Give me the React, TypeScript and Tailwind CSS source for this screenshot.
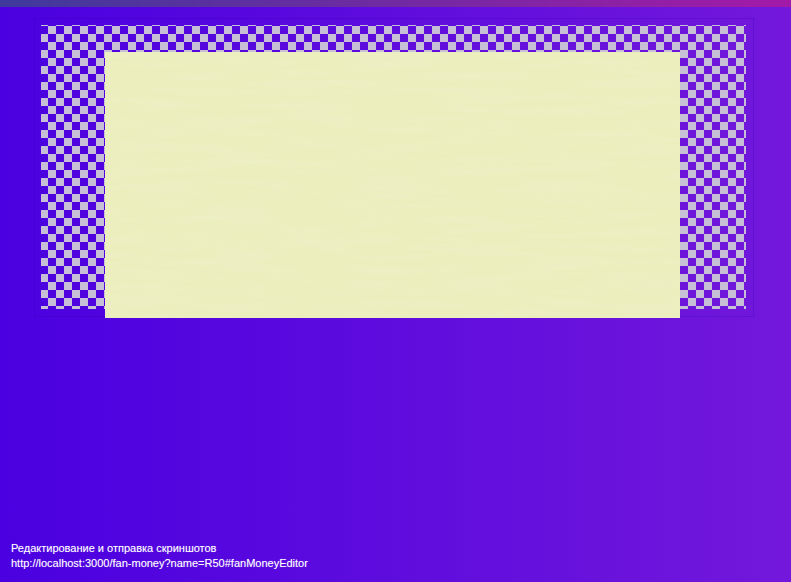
export default function App() {
  return (
    <div className="relative flex h-[582px] w-[791px] flex-col overflow-hidden bg-[linear-gradient(90deg,#4a00e0,#7318db)] font-['Liberation_Sans',sans-serif] text-[11px] leading-[15px] text-white [text-shadow:0_0_1px_#ffffff55]">
      <div className="h-[7px] bg-[linear-gradient(90deg,#3f3a9c,#a31aa8)]" />
      <div className="ml-[34px] mt-[11px] h-[299px] w-[720px] border border-[#2a009c33] p-[6px]">
        <div className="h-[284px] w-[705px] bg-[conic-gradient(#c6bfd6_25%,transparent_0_50%,#c6bfd6_0_75%,transparent_0)] bg-[length:16px_16px] bg-[position:-1px_1px] pl-[64px] pt-[27px]">
          <div className="relative h-[266px] w-[575px] overflow-hidden bg-[#eceebd]">
            <svg className="h-full w-full" width="575" height="266">
              <filter id="paper">
                <feTurbulence type="fractalNoise" baseFrequency="0.012 0.14" numOctaves="2" seed="4" />
                <feColorMatrix values="0 0 0 0 0.88  0 0 0 0 0.9  0 0 0 0 0.68  1.2 0 0 0 -0.45" />
              </filter>
              <rect width="575" height="266" filter="url(#paper)" opacity="0.5" />
            </svg>
          </div>
        </div>
      </div>
      <div className="mt-auto pb-[11px] pl-[11px]">
        <div>Редактирование и отправка скриншотов</div>
        <div>http://localhost:3000/fan-money?name=R50#fanMoneyEditor</div>
      </div>
    </div>
  );
}
